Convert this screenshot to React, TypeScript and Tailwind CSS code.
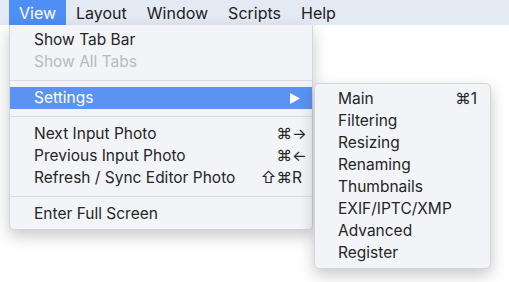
import React from "react";

type Item =
  | { kind: "sep" }
  | { kind: "item"; label: string; mods?: string; keyChar?: string; disabled?: boolean; active?: boolean; sub?: boolean };

const viewMenu: Item[] = [
  { kind: "item", label: "Show Tab Bar" },
  { kind: "item", label: "Show All Tabs", disabled: true },
  { kind: "sep" },
  { kind: "item", label: "Settings", active: true, sub: true },
  { kind: "sep" },
  { kind: "item", label: "Next Input Photo", mods: "⌘", keyChar: "→" },
  { kind: "item", label: "Previous Input Photo", mods: "⌘", keyChar: "←" },
  { kind: "item", label: "Refresh / Sync Editor Photo", mods: "⇧⌘", keyChar: "R" },
  { kind: "sep" },
  { kind: "item", label: "Enter Full Screen" },
];

const settingsMenu = ["Main", "Filtering", "Resizing", "Renaming", "Thumbnails", "EXIF/IPTC/XMP", "Advanced", "Register"];

const font = { fontFamily: '"Inter", "DejaVu Sans", sans-serif' };

function Shortcut({ mods, keyChar }: { mods?: string; keyChar?: string }) {
  if (!mods && !keyChar) return null;
  return (
    <div className="flex items-center -mr-[8px]">
      <span className="text-right">{mods}</span>
      <span className="w-[14px] text-left">{keyChar}</span>
    </div>
  );
}

function MenuRow({ item }: { item: Item }) {
  if (item.kind === "sep") {
    return (
      <div className="h-[14px] flex items-center">
        <div className="w-full h-px bg-[#dcdde1]" />
      </div>
    );
  }
  return (
    <div
      className={
        "h-[22px] flex items-center justify-between pl-[24px] pr-[14px] " +
        (item.active ? "bg-[#5b93f3] text-white" : item.disabled ? "text-[#b9bbbe]" : "text-[#262626]")
      }
    >
      <span>{item.label}</span>
      {item.sub ? (
        <svg width="10" height="11" viewBox="0 0 10 11" className="-mr-[2px]">
          <polygon points="0,0 10,5.5 0,11" fill="white" />
        </svg>
      ) : (
        <Shortcut mods={item.mods} keyChar={item.keyChar} />
      )}
    </div>
  );
}

export default function App() {
  const bar = ["View", "Layout", "Window", "Scripts", "Help"];
  return (
    <div className="relative w-[509px] h-[282px] bg-white overflow-hidden text-[15.5px]" style={font}>
      <div className="h-[25px] bg-[#e3eaf4] flex items-center pl-[9px] text-[#222] text-[16px]">
        {bar.map((b, i) => (
          <div
            key={b}
            className={
              "h-full flex items-center px-[10px] " + (i === 0 ? "bg-[#4f8ef5] text-white" : "")
            }
          >
            {b}
          </div>
        ))}
      </div>

      {/* View menu */}
      <div className="absolute left-[9px] top-[25px] w-[304px] pt-[4px] pb-[4px] bg-[#f2f4f7] rounded-b-[5px] border border-t-0 border-[#d3d5d9] shadow-[0_6px_16px_rgba(0,0,0,0.22)]">
        {viewMenu.map((it, i) => (
          <MenuRow key={i} item={it} />
        ))}
      </div>

      {/* Settings submenu */}
      <div className="absolute left-[314px] top-[83px] w-[177px] pt-[4px] pb-[4px] bg-[#f2f4f7] rounded-[5px] border border-[#d3d5d9] shadow-[0_6px_16px_rgba(0,0,0,0.22)]">
        {settingsMenu.map((s, i) => (
          <div key={s} className="h-[22px] flex items-center justify-between pl-[23px] pr-[13px] text-[#262626]">
            <span>{s}</span>
            {i === 0 && <span>⌘1</span>}
          </div>
        ))}
      </div>
    </div>
  );
}
